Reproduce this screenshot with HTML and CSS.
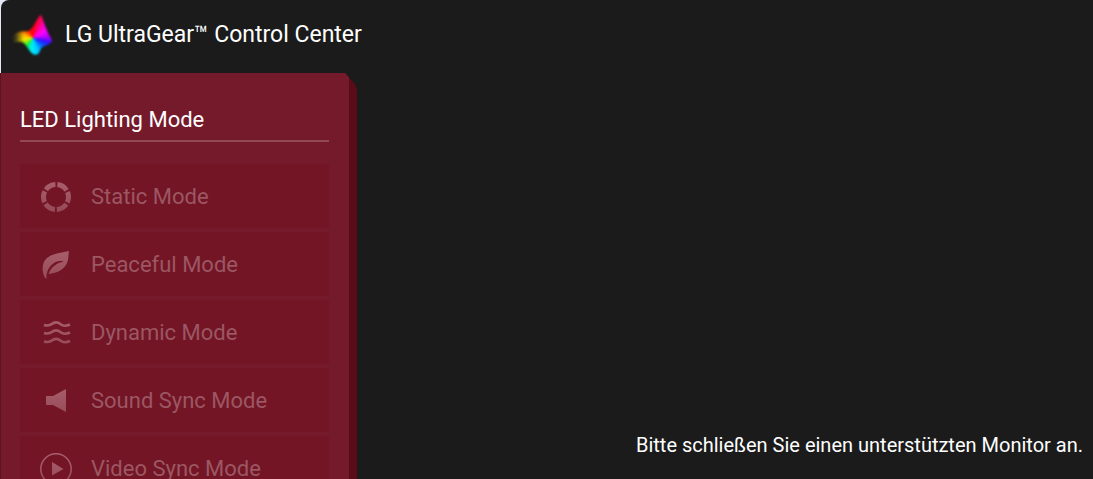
FILE: index.html
```
<!DOCTYPE html>
<html lang="de">
<head>
  <meta charset="UTF-8">
  <meta name="viewport" content="width=device-width, initial-scale=1.0">
  <title>LG UltraGear™ Control Center</title>
  <link rel="stylesheet" href="styles.css">
</head>
<body>
  <div class="window">
    <header class="titlebar">
      <span class="logo"><span class="logo-shape"></span></span>
      <h1>LG UltraGear™ Control Center</h1>
    </header>
    <div class="content">
      <nav class="sidebar">
        <div class="panel">
          <h2>LED Lighting Mode</h2>
          <svg class="defs" width="0" height="0" aria-hidden="true">
            <linearGradient id="fade" gradientUnits="userSpaceOnUse" x1="0" y1="0" x2="0" y2="32">
              <stop offset="0" stop-color="#a95f6c"/>
              <stop offset="1" stop-color="#954957"/>
            </linearGradient>
          </svg>
          <button class="mode" disabled>
            <svg viewBox="0 0 32 32"><circle cx="16" cy="16" r="12.5" fill="none" stroke="url(#fade)" stroke-width="5" stroke-dasharray="11.09 2" stroke-dashoffset="5.545"/></svg>
            Static Mode
          </button>
          <button class="mode" disabled>
            <svg viewBox="0 0 32 32"><path fill="url(#fade)" d="M29 2C22 4 13 4 7 9C2 13 2 21 3.500 25C4 28 5 29 6.500 30C6 23 9 17 14 14C17 12 21 11.500 23.500 12.500C17 14 11 18 8.500 25C17 24 24 21 27 14C29 10 28 6 29 2Z"/></svg>
            Peaceful Mode
          </button>
          <button class="mode" disabled>
            <svg viewBox="0 0 32 32"><g fill="none" stroke="url(#fade)" stroke-width="2.600"><path d="M4 8C7 9 8 9 11 7.500C15 4.500 18 4.500 21 7.500C24 9.500 27 9 30 7.500"/><path d="M4 16C7 17 8 17 11 15.500C15 12.500 18 12.500 21 15.500C24 17.500 27 17 30 15.500"/><path d="M4 24.500C7 25.500 8 25.500 11 24C15 21 18 21 21 24C24 26 27 25.500 30 24"/></g></svg>
            Dynamic Mode
          </button>
          <button class="mode" disabled>
            <svg viewBox="0 0 32 32"><path fill="url(#fade)" d="M6 11H13L26 4V27L13 20H6Z"/></svg>
            Sound Sync Mode
          </button>
          <button class="mode" disabled>
            <svg viewBox="0 0 32 32"><circle cx="16" cy="16" r="15.200" fill="none" stroke="url(#fade)" stroke-width="1.600"/><path fill="url(#fade)" d="M12 9V22.500L23.500 16Z"/></svg>
            Video Sync Mode
          </button>
        </div>
      </nav>
      <main class="main">
        <p>Bitte schließen Sie einen unterstützten Monitor an.</p>
      </main>
    </div>
  </div>
</body>
</html>
```
FILE: styles.css
```
* {
  box-sizing: border-box;
}
body {
  margin: 0;
  background: #e6e8f5;
  color: #fff;
  font-family: Roboto, "Liberation Sans", sans-serif;
}
h1, h2, p {
  margin: 0;
  font-weight: 400;
}
.window {
  display: flex;
  flex-direction: column;
  height: 100vh;
  overflow: hidden;
}
.titlebar {
  flex: none;
  display: flex;
  align-items: center;
  gap: 10px;
  height: 73px;
  margin-left: 1px;
  padding: 0 12px 4px;
  background: #1b1b1b;
  border-top-left-radius: 8px;
}
.titlebar h1 {
  font-size: 23px;
  line-height: 28px;
}
.logo {
  width: 42px;
  height: 42px;
  filter: blur(1px);
}
.logo-shape {
  display: block;
  width: 42px;
  height: 42px;
  background:
    linear-gradient(90deg, #1b1b1b 1px, transparent 11px),
    conic-gradient(from 0deg at 20px 24px, #ff0010, #ff0040 18deg, #ff00b0 35deg, #f0f 60deg, #b000ff 88deg, #3010ff 105deg, #0060ff 130deg, #00c0ff 155deg, #00f0ff 185deg, #00f060 215deg, #90f000 240deg, #ffe800 262deg, #ffc000 285deg, #ff6000 310deg, #ff1000 335deg, #ff0010);
  clip-path: path("M28 1C32 12 35 21 39 26C39 32 31 31 28 35C26 40 25 42 21 41C16 39 14 31 10 29C7 27 3 30 0 27C0 20 7 17 14 18C20 17 22 7 28 1Z");
}
.content {
  flex: 1;
  display: flex;
  min-height: 0;
  background: #1b1b1b;
}
.sidebar {
  flex: none;
  width: 357px;
  background: #590c17;
  border-left: 1px solid #591522;
  padding-right: 8px;
  overflow: hidden;
  clip-path: polygon(0 0, 345px 0, 355px 11px, 357px 16px, 357px 100%, 0 100%);
}
.panel {
  min-height: 100%;
  padding: 32px 20px 0 19px;
  background: #751a2a;
}
.panel h2 {
  margin-bottom: 22px;
  padding-bottom: 5px;
  border-bottom: 2px solid #934856;
  font-size: 22px;
  line-height: 30px;
}
.defs {
  position: absolute;
}
.mode {
  display: flex;
  align-items: center;
  gap: 19px;
  width: 100%;
  height: 64px;
  margin-bottom: 4px;
  padding: 1px 20px 0;
  border: 0;
  background: #731525;
  color: #9b5763;
  font: 400 22px/28px Roboto, "Liberation Sans", sans-serif;
}
.mode svg {
  width: 32px;
  height: 32px;
}
.main {
  flex: 1;
  display: flex;
  align-items: flex-end;
  justify-content: flex-end;
  padding: 20px 10px;
}
.main p {
  font-size: 20px;
  line-height: 28px;
}
```
